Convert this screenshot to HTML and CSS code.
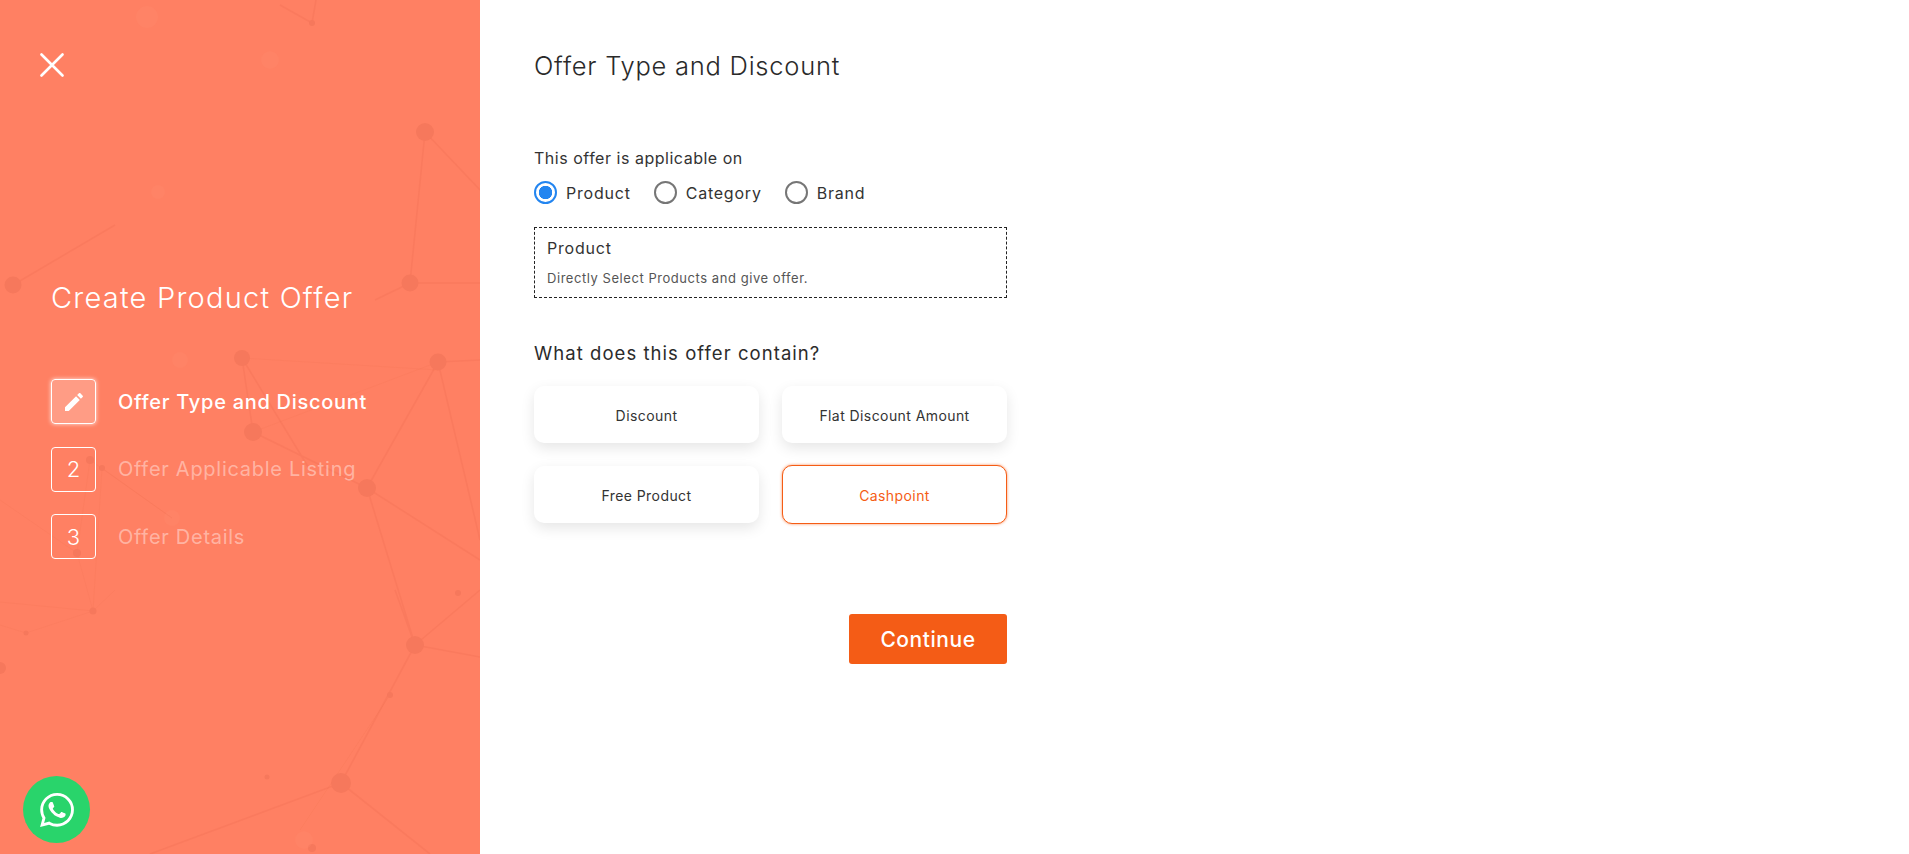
FILE: index.html
```html
<!DOCTYPE html>
<html lang="en">
<head>
<meta charset="utf-8">
<title>Create Product Offer</title>
<link rel="stylesheet" href="styles.css">
</head>
<body>
<div class="page">
  <aside class="sidebar">
    <svg class="network" viewBox="0 0 480 854" aria-hidden="true">
      <g class="edges">
        <path d="M425 132L410 283M425 132L480 190M410 283L480 283M410 283L375 300"/>
        <path d="M13 285L115 225M312 23L316 0M312 23L280 5"/>
        <path d="M242 358L253 432M253 432L367 488M242 358L310 470M438 362L367 488M438 362L480 360M438 362L480 540"/>
        <path d="M367 488L480 560M367 488L415 645M415 645L341 783M415 645L480 590M415 645L480 657M415 645L395 590M341 783L150 854M341 783L430 854"/>
      </g>
      <g class="edges faint">
        <path d="M90 460L77 553M102 468L93 611M77 553L93 611M90 460L172 518M102 468L172 518M77 553L0 500M93 611L115 590M93 611L26 633M93 611L0 602M26 633L0 625"/>
        <path d="M253 432L438 362M242 358L438 370M390 695L300 830"/>
      </g>
      <g class="nodes">
        <circle cx="425" cy="132" r="9"/><circle cx="410" cy="283" r="8.5"/><circle cx="13" cy="285" r="8.5"/>
        <circle cx="312" cy="23" r="3"/><circle cx="242" cy="358" r="8"/><circle cx="438" cy="362" r="8.5"/>
        <circle cx="253" cy="432" r="9"/><circle cx="367" cy="488" r="9"/><circle cx="90" cy="460" r="4"/>
        <circle cx="102" cy="468" r="3"/><circle cx="77" cy="553" r="4"/><circle cx="93" cy="611" r="3.5"/>
        <circle cx="26" cy="633" r="2.5"/><circle cx="0" cy="668" r="6"/><circle cx="415" cy="645" r="9"/>
        <circle cx="390" cy="695" r="3"/><circle cx="341" cy="783" r="10"/><circle cx="458" cy="593" r="3"/>
        <circle cx="312" cy="848" r="4"/><circle cx="267" cy="777" r="2.5"/>
      </g>
      <g class="glints">
        <circle cx="147" cy="17" r="11"/><circle cx="270" cy="60" r="9"/><circle cx="158" cy="192" r="7"/>
        <circle cx="172" cy="518" r="8"/><circle cx="304" cy="840" r="9"/><circle cx="180" cy="360" r="8"/>
      </g>
    </svg>

    <button class="close" type="button" aria-label="Close">
      <svg viewBox="0 0 24 24" class="close-icon"><path d="M1.5 1.5L22.5 22.5M22.5 1.5L1.5 22.5"/></svg>
    </button>

    <h1 class="sidebar-title">Create Product Offer</h1>

    <ol class="steps">
      <li class="step active">
        <span class="step-box">
          <svg viewBox="0 0 24 24" class="pencil"><path d="M3 17.25V21h3.75L17.81 9.94l-3.75-3.75L3 17.25zM20.71 7.04c.39-.39.39-1.02 0-1.41l-2.34-2.34c-.39-.39-1.02-.39-1.41 0l-1.83 1.83 3.75 3.75 1.83-1.83z"/></svg>
        </span>
        <span class="step-label">Offer Type and Discount</span>
      </li>
      <li class="step">
        <span class="step-box">2</span>
        <span class="step-label">Offer Applicable Listing</span>
      </li>
      <li class="step">
        <span class="step-box">3</span>
        <span class="step-label">Offer Details</span>
      </li>
    </ol>

    <a class="whatsapp" href="#" aria-label="WhatsApp">
      <svg viewBox="0 0 24 24" class="whatsapp-icon"><path d="M17.472 14.382c-.297-.149-1.758-.867-2.03-.967-.273-.099-.471-.148-.67.15-.197.297-.767.966-.94 1.164-.173.199-.347.223-.644.075-.297-.15-1.255-.463-2.39-1.475-.883-.788-1.48-1.761-1.653-2.059-.173-.297-.018-.458.13-.606.134-.133.298-.347.446-.52.149-.174.198-.298.298-.497.099-.198.05-.371-.025-.52-.075-.149-.669-1.612-.916-2.207-.242-.579-.487-.5-.669-.51-.173-.008-.371-.01-.57-.01-.198 0-.52.074-.792.372-.272.297-1.04 1.016-1.04 2.479 0 1.462 1.065 2.875 1.213 3.074.149.198 2.096 3.2 5.077 4.487.709.306 1.262.489 1.694.625.712.227 1.36.195 1.871.118.571-.085 1.758-.719 2.006-1.413.248-.694.248-1.289.173-1.413-.074-.124-.272-.198-.57-.347m-5.421 7.403h-.004a9.87 9.87 0 01-5.031-1.378l-.361-.214-3.741.982.998-3.648-.235-.374a9.86 9.86 0 01-1.51-5.26c.001-5.45 4.436-9.884 9.888-9.884 2.64 0 5.122 1.03 6.988 2.898a9.825 9.825 0 012.893 6.994c-.003 5.45-4.437 9.884-9.885 9.884m8.413-18.297A11.815 11.815 0 0012.05 0C5.495 0 .16 5.335.157 11.892c0 2.096.547 4.142 1.588 5.945L.057 24l6.305-1.654a11.882 11.882 0 005.683 1.448h.005c6.554 0 11.89-5.335 11.893-11.893a11.821 11.821 0 00-3.48-8.413z"/></svg>
    </a>
  </aside>

  <main class="main">
    <h2 class="main-title">Offer Type and Discount</h2>

    <p class="field-label">This offer is applicable on</p>
    <div class="radios">
      <label class="radio checked"><span class="radio-dot"></span>Product</label>
      <label class="radio"><span class="radio-dot"></span>Category</label>
      <label class="radio"><span class="radio-dot"></span>Brand</label>
    </div>

    <div class="note">
      <div class="note-title">Product</div>
      <div class="note-text">Directly Select Products and give offer.</div>
    </div>

    <h3 class="question">What does this offer contain?</h3>
    <div class="options">
      <div class="option">Discount</div>
      <div class="option">Flat Discount Amount</div>
      <div class="option">Free Product</div>
      <div class="option selected">Cashpoint</div>
    </div>

    <div class="actions">
      <button class="continue" type="button">Continue</button>
    </div>
  </main>
</div>
</body>
</html>
```
FILE: styles.css
```css
* { box-sizing: border-box; }
html, body { margin: 0; height: 100%; background: #fff; }
body { font-family: Inter, "Noto Sans", sans-serif; color: #2b2b2b; overflow: hidden; }

.page { display: flex; height: 854px; }

.sidebar {
  position: relative;
  width: 480px;
  height: 854px;
  flex: none;
  background: #ff8063;
  overflow: hidden;
  padding: 53px 0 0 40px;
}
.network { position: absolute; inset: 0; width: 480px; height: 854px; }
.edges path { fill: none; stroke: #ee6e52; stroke-width: 1.6; opacity: .3; }
.edges.faint path { stroke-width: 1; opacity: .16; }
.nodes circle { fill: #f6785c; }
.glints circle { fill: #ff8b70; opacity: .25; }

.close { position: relative; display: block; width: 24px; height: 24px; padding: 0; border: 0; background: none; }
.close-icon { display: block; width: 24px; height: 24px; fill: none; stroke: #fff; stroke-width: 2.6; stroke-linecap: round; }

.sidebar-title {
  position: relative;
  margin: 203px 0 0 11px;
  font-size: 29px;
  line-height: 36px;
  font-weight: 300;
  letter-spacing: 1.22px;
  color: #fff;
}

.steps { position: relative; list-style: none; margin: 63px 0 0 11px; padding: 0; }
.step { display: flex; align-items: center; gap: 22px; height: 45px; margin-bottom: 22.5px; }
.step-box {
  width: 45px; height: 45px; flex: none;
  display: flex; align-items: center; justify-content: center;
  border: 1px solid #fff; border-radius: 4px;
  font-size: 22px; font-weight: 300; color: #fff;
}
.step-label { font-size: 20px; font-weight: 400; letter-spacing: .72px; color: rgba(255,255,255,.42); }
.step.active .step-box { background: rgba(255,255,255,.22); box-shadow: 0 0 4px rgba(255,255,255,.8); }
.step.active .step-label { font-weight: 500; color: #fff; }
.pencil { width: 24px; height: 24px; fill: #fff; }

.whatsapp {
  position: absolute; left: 23px; bottom: 11px;
  width: 67px; height: 67px; border-radius: 50%;
  background: #29d46b;
  display: flex; align-items: center; justify-content: center;
}
.whatsapp-icon { width: 34px; height: 34px; fill: #fff; }

.main { width: 527px; padding: 50px 0 0 54px; }
.main-title { margin: 0; font-size: 25.5px; line-height: 32px; font-weight: 300; letter-spacing: .75px; color: #2a2a2a; }
.field-label { margin: 66px 0 0; font-size: 16px; line-height: 20px; font-weight: 400; letter-spacing: .52px; color: #333; }
.radios { display: flex; margin-top: 13px; height: 23px; gap: 23px; }
.radio { display: flex; align-items: center; gap: 9px; font-size: 16px; letter-spacing: .78px; color: #333; }
.radio-dot { width: 23px; height: 23px; border: 2px solid #767676; border-radius: 50%; flex: none; }
.radio.checked .radio-dot { border-color: #2385f0; background: radial-gradient(circle, #2385f0 0 6.4px, transparent 7px); }

.note { margin-top: 23px; height: 71px; border: 1px dashed #222; padding: 10px 12px 0; }
.note-title { font-size: 16px; line-height: 20px; letter-spacing: .78px; color: #333; }
.note-text { margin-top: 11px; font-size: 13px; line-height: 18px; letter-spacing: .55px; color: #555; }

.question { margin: 43px 0 0; font-size: 18.5px; line-height: 24px; font-weight: 400; letter-spacing: 1.05px; color: #2b2b2b; }
.options { display: grid; grid-template-columns: 225px 225px; gap: 23px; margin-top: 21px; }
.option {
  height: 57px; display: flex; align-items: center; justify-content: center;
  background: #fff; border-radius: 10px;
  box-shadow: 0 5px 14px rgba(0,0,0,.1);
  font-size: 14px; letter-spacing: .42px; color: #333;
  padding-top: 1px;
}
.option.selected {
  height: 59px; margin-top: -1px;
  border: 1.5px solid #f55d15; box-shadow: 0 0 3px rgba(245,93,21,.7);
  color: #f55d15;
}
.actions { display: flex; justify-content: flex-end; margin-top: 90px; }
.continue {
  width: 158px; height: 50px; border: 0; border-radius: 3px;
  background: #f45c16; color: #fff;
  font-family: inherit; font-size: 21px; font-weight: 500; letter-spacing: .55px;
}
```
